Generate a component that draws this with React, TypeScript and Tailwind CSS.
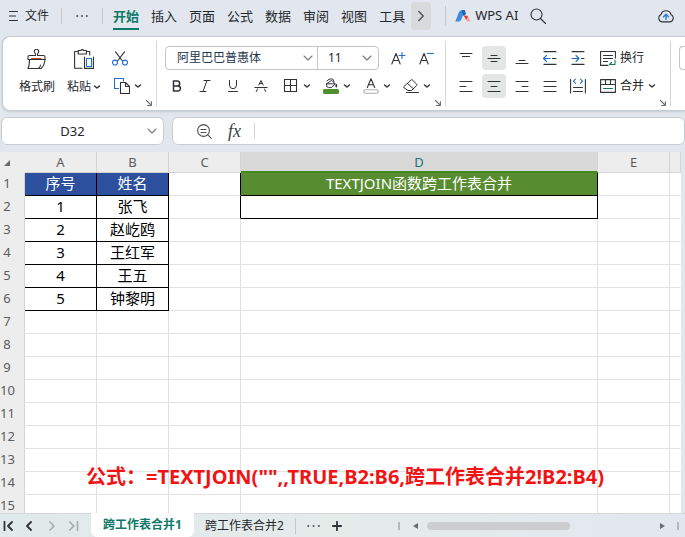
import { useState } from 'react';
import type { ReactNode } from 'react';

type IconProps = { w: number; h: number; children: ReactNode };

function Icon({ w, h, children }: IconProps) {
  return (
    <svg
      width={w}
      height={h}
      viewBox={`0 0 ${w} ${h}`}
      fill="none"
      stroke="#2f3237"
      strokeWidth="1.1"
      strokeLinecap="round"
      strokeLinejoin="round"
      className="shrink-0"
      aria-hidden="true"
    >
      {children}
    </svg>
  );
}

function Caret() {
  return (
    <Icon w={8} h={6}>
      <path d="M1.5 2 4 4l2.5-2" strokeWidth="1.5" />
    </Icon>
  );
}

function Chevron() {
  return (
    <Icon w={10} h={6}>
      <path d="m1 1 4 4 4-4" stroke="#777b80" />
    </Icon>
  );
}

function Launcher() {
  return (
    <button type="button" aria-label="更多设置" className="absolute bottom-1 right-1">
      <Icon w={6} h={6}>
        <path d="m.5.5 4.5 4.5M5.4 1.5v4H1.5" stroke="#6b6f75" />
      </Icon>
    </button>
  );
}

function ToolButton({ label, active, wide, children }: { label: string; active?: boolean; wide?: boolean; children: ReactNode }) {
  return (
    <button
      type="button"
      aria-label={label}
      className={`flex h-6 shrink-0 items-center justify-center rounded ${wide ? 'w-9 gap-1' : 'w-6'} ${active ? 'bg-[#e4e6e5]' : ''}`}
    >
      {children}
    </button>
  );
}

function Divider() {
  return <div className="my-1 w-px shrink-0 bg-[#d3d6da]" />;
}

const menuTabs = ['开始', '插入', '页面', '公式', '数据', '审阅', '视图', '工具'];

function MenuBar() {
  const [tab, setTab] = useState('开始');

  return (
    <header className="mb-1 flex h-8 shrink-0 items-center overflow-hidden pl-[9px] pr-[11px]">
      <button type="button" className="flex items-center gap-[7px] text-xs">
        <Icon w={9} h={12}>
          <path d="M.5 1.5h8M.5 6h6M.5 10.5h8" />
        </Icon>
        文件
      </button>
      <div className="ml-3 h-4 w-px bg-[#c5c9d0]" />
      <button type="button" aria-label="快速访问" className="mx-[14px]">
        <Icon w={12} h={4}>
          <path d="M1 2h.5M5.8 2h.5M10.6 2h.5" strokeWidth="1.6" />
        </Icon>
      </button>
      <div className="h-4 w-px bg-[#c5c9d0]" />
      <nav className="ml-[10px] flex gap-3">
        {menuTabs.map((name) => (
          <button
            key={name}
            type="button"
            onClick={() => setTab(name)}
            className={`h-7 shrink-0 border-y-2 border-t-transparent pt-0.5 text-[13px] ${
              tab === name ? 'border-b-[#0d7a68] font-bold text-[#0d7a68]' : 'border-b-transparent'
            }`}
          >
            {name}
          </button>
        ))}
      </nav>
      <button type="button" aria-label="更多选项卡" className="ml-[6px] flex h-7 w-5 shrink-0 items-center justify-center rounded bg-[#d9dadc]">
        <Icon w={6} h={12}>
          <path d="m.8 1.5 4.4 4.5L.8 10.5" stroke="#4b4e52" strokeWidth="1.4" />
        </Icon>
      </button>
      <div className="ml-[14px] h-5 w-px shrink-0 bg-[#c5c9d0]" />
      <button type="button" className="ml-[9px] flex shrink-0 items-center gap-1 text-[13px]">
        <Icon w={16} h={12}>
          <path d="M.3 11.500 4 2Q4.800.3 6.500.3H10L6.300 9.500Q5.500 11.500 4 11.500Z" fill="#3c8de0" stroke="none" />
          <path d="M6.500.3H10l1 3.700-2.500 2Z" fill="#1b62b5" stroke="none" />
          <path d="m9.500 8 3.300-2 2.900 5.500h-3.500Z" fill="#f3a79d" stroke="none" />
          <path d="m8.300 5.300 4.500.7-1.300 3.800Z" fill="#e2372c" stroke="none" />
        </Icon>
        WPS AI
      </button>
      <button type="button" aria-label="搜索" className="ml-3 shrink-0">
        <Icon w={16} h={16}>
          <circle cx="6.5" cy="6.5" r="5.5" />
          <path d="m10.500 10.500 5 5" />
        </Icon>
      </button>
      <button type="button" aria-label="云同步" className="ml-auto shrink-0">
        <Icon w={16} h={14}>
          <path d="M4.500 12.900a3.900 3.900 0 0 1-1.500-7.400 5.200 5.200 0 0 1 10 0 3.900 3.900 0 0 1-1.500 7.400Z" />
          <path d="M8 10.500V5.500M5.500 7.800 8 5.300l2.500 2.500" stroke="#2f7fd8" strokeWidth="1.5" />
        </Icon>
      </button>
    </header>
  );
}

function ClipboardGroup() {
  return (
    <section className="relative flex w-[153px] shrink-0 pl-4 pt-3">
      <button type="button" className="flex h-[46px] w-9 flex-col items-center justify-between text-xs leading-4">
        <Icon w={20} h={20}>
          <path d="M8.500 6.500V5L7.500 3.300a2.200 2.200 0 1 1 4 0L10.500 5v1.500h6q1.500 0 1.500 1.500v2.500H1V8q0-1.500 1.500-1.500Z" />
          <path d="M2.500 10.500q0 6-1.500 9h13q3.500-3 4-9M11.500 19.300q1.800-1 2-3.300" />
          <path d="M4.500 9.500h9.500" stroke="#c9421c" strokeWidth="1.200" />
        </Icon>
        <span className="whitespace-nowrap">格式刷</span>
      </button>
      <button type="button" className="ml-3 flex h-[46px] flex-col items-start justify-between text-xs leading-4">
        <span className="pl-[7px]">
          <Icon w={20} h={20}>
            <path d="M4 2.500H.6v16.800H8M12.500 2.500h3.200V6" />
            <path d="M4.200 1.500h2.500q1.600-1.700 3.200 0h2.500v3.500H4.200Z" />
            <path d="M10.500 8v11.400M19.400 8v11.400h-8" />
            <rect x="12.500" y="9.500" width="5" height="8" stroke="#1f6fd0" />
          </Icon>
        </span>
        <span className="flex items-center gap-[2px] whitespace-nowrap">
          粘贴
          <Caret />
        </span>
      </button>
      <div className="ml-[11px] flex flex-col gap-3 pt-0.5">
        <button type="button" aria-label="剪切">
          <Icon w={16} h={15}>
            <path d="M3.500.8 10.500 10M12.500.8 5.500 10" />
            <circle cx="3" cy="11.600" r="2.500" stroke="#1f6fd0" />
            <circle cx="13" cy="11.600" r="2.500" stroke="#1f6fd0" />
          </Icon>
        </button>
        <button type="button" aria-label="复制" className="flex items-center gap-1 pl-[2px]">
          <Icon w={16} h={16}>
            <path d="M4.500 10.500H.5V.5h9V3" stroke="#1f6fd0" />
            <path d="M6.500 4.500h5l4 4v7h-9ZM11.500 4.700v3.800h3.800" />
          </Icon>
          <Caret />
        </button>
      </div>
      <Launcher />
    </section>
  );
}

function FontGroup() {
  return (
    <section className="relative flex w-[288px] shrink-0 flex-col gap-1 pl-2 pt-[9px]">
      <div className="flex items-center">
        <div className="flex h-6 w-[214px] items-center rounded border border-[#c3c6ca] text-xs">
          <label className="relative flex h-full w-[152px] items-center border-r border-[#c3c6ca]">
            <select aria-label="字体" className="h-full w-full appearance-none pl-[11px] leading-5 text-[#24364d] outline-none">
              <option>阿里巴巴普惠体</option>
            </select>
            <span className="pointer-events-none absolute right-1">
              <Chevron />
            </span>
          </label>
          <label className="relative flex h-full flex-1 items-center">
            <select aria-label="字号" className="h-full w-full appearance-none pl-[10px] outline-none">
              <option>11</option>
            </select>
            <span className="pointer-events-none absolute right-[6px]">
              <Chevron />
            </span>
          </label>
        </div>
        <div className="ml-[7px] flex gap-1">
          <ToolButton label="增大字号">
            <Icon w={15} h={15}>
              <path d="m.8 13 4.200-10.500L9.200 13M2.300 9.500h5.400" />
              <path d="M11 1.500v6M8 4.500h6" stroke="#1f6fd0" />
            </Icon>
          </ToolButton>
          <ToolButton label="减小字号">
            <Icon w={15} h={15}>
              <path d="m.8 13 4.200-10.500L9.200 13M2.300 9.500h5.400" />
              <path d="M8.500 2.500h6" stroke="#1f6fd0" />
            </Icon>
          </ToolButton>
        </div>
      </div>
      <div className="flex items-center">
        <div className="flex gap-1">
          <ToolButton label="加粗">
            <Icon w={10} h={12}>
              <path d="M1.500 1h3.700a2.400 2.400 0 0 1 0 4.900H1.500ZM1.500 5.900h4.400a2.500 2.500 0 0 1 0 5H1.500Z" strokeWidth="1.500" />
            </Icon>
          </ToolButton>
          <ToolButton label="倾斜">
            <Icon w={12} h={12}>
              <path d="M5 .5h6M1 11.500h6M8 .5 4 11.500" strokeWidth="1" />
            </Icon>
          </ToolButton>
          <ToolButton label="下划线">
            <Icon w={10} h={12}>
              <path d="M1.500.5v4.500a3.500 3.700 0 0 0 7 0V.5M.5 11.500h9" strokeWidth="1" />
            </Icon>
          </ToolButton>
          <ToolButton label="删除线">
            <Icon w={14} h={12}>
              <path d="M4.800 5 7 .5 9.200 5M5.700 3.500h2.600M.8 7.500h12.400M3.500 9l-1.200 2.500M10.500 9l1.200 2.500" strokeWidth="1" />
            </Icon>
          </ToolButton>
        </div>
        <div className="ml-[6px] flex gap-1">
          <ToolButton label="边框" wide>
            <Icon w={16} h={14}>
              <path d="M1.500.5h12v12h-12ZM7.500.5v12M1.500 6.500h12" />
            </Icon>
            <Caret />
          </ToolButton>
          <ToolButton label="填充颜色" wide>
            <Icon w={16} h={16}>
              <path d="M4 2.800Q6 .6 8.500.8q2.500.2 2.500 2.700M8.300 2.500 3.500 5.800q-.5 3.800 2 3.800h2.800l3.700-3.300ZM3.500 5.800h8" strokeWidth="1" />
              <path d="M13.300 7v1.500" strokeWidth="1.800" />
              <rect x=".5" y="11.500" width="15" height="4" rx="1.500" fill="#4f8e2c" stroke="#4f8e2c" />
            </Icon>
            <Caret />
          </ToolButton>
          <ToolButton label="字体颜色" wide>
            <Icon w={16} h={16}>
              <path d="M4.300 9.500 8 .7l3.700 8.800M5.500 6.800h5" />
              <rect x=".7" y="11.700" width="14.600" height="3.600" rx="1.800" fill="#fff" stroke="#a9acb0" />
            </Icon>
            <Caret />
          </ToolButton>
          <ToolButton label="清除" wide>
            <Icon w={16} h={14}>
              <path d="M1 7.500 8 1q.7-.6 1.400 0l4.300 4.200q.6.700 0 1.300L8.500 11.500H5L1 8.700ZM4.500 4.500l5.800 5.200" strokeWidth="1" />
              <path d="M3.500 13.500h12" />
            </Icon>
            <Caret />
          </ToolButton>
        </div>
      </div>
      <Launcher />
    </section>
  );
}

function AlignGroup() {
  return (
    <section className="relative flex w-[224px] shrink-0 flex-col gap-1 pl-2 pt-[9px]">
      <div className="flex items-center gap-1">
        <ToolButton label="顶端对齐">
          <Icon w={14} h={14}>
            <path d="M1 2.500h12M3.500 5.500h7" />
          </Icon>
        </ToolButton>
        <ToolButton label="垂直居中" active>
          <Icon w={14} h={14}>
            <path d="M4 4.500h6M1 7.500h12M4 10.500h6" />
          </Icon>
        </ToolButton>
        <ToolButton label="底端对齐">
          <Icon w={14} h={14}>
            <path d="M4 9.500h6M1 12.500h12" />
          </Icon>
        </ToolButton>
        <ToolButton label="减少缩进量">
          <Icon w={14} h={14}>
            <path d="M1 .6h12M9.500 7.500H13M1 13.400h12" />
            <path d="M1 7.500h6M3.500 4.500l-3 3 3 3" stroke="#1f6fd0" />
          </Icon>
        </ToolButton>
        <ToolButton label="增加缩进量">
          <Icon w={14} h={14}>
            <path d="M1 .6h12M10.500 7.500H13M1 13.400h12" />
            <path d="M1 7.500h6.500M5 4.500l3 3-3 3" stroke="#1f6fd0" />
          </Icon>
        </ToolButton>
        <button type="button" className="ml-[6px] flex items-center gap-1 text-xs">
          <Icon w={16} h={15}>
            <path d="M8 14.400H.6V.5h14.800V7M3.500 4.500h9M3.500 7.500h9M3.500 10.500h4" />
            <path d="M15 9v4.500h-5M11.500 11.500l-2 2" stroke="#15795f" />
          </Icon>
          换行
        </button>
      </div>
      <div className="flex items-center gap-1">
        <ToolButton label="左对齐">
          <Icon w={14} h={14}>
            <path d="M1 2.500h12M1 7.500h6M1 12.500h12" />
          </Icon>
        </ToolButton>
        <ToolButton label="水平居中" active>
          <Icon w={14} h={14}>
            <path d="M1 2.500h12M4 7.500h6M1 12.500h12" />
          </Icon>
        </ToolButton>
        <ToolButton label="右对齐">
          <Icon w={14} h={14}>
            <path d="M1 2.500h12M7 7.500h6M1 12.500h12" />
          </Icon>
        </ToolButton>
        <ToolButton label="两端对齐">
          <Icon w={14} h={14}>
            <path d="M1 2.500h12M1 7.500h12M1 12.500h12" />
          </Icon>
        </ToolButton>
        <ToolButton label="分散对齐">
          <Icon w={16} h={16}>
            <path d="M.6 1.500v13.500M15.400 1.500v13.500M3.500 9.500h9M3.500 13.500h9" />
            <path d="M5.500 1 3.500 3.200l2 2.200M10.500 1l2 2.200-2 2.200" stroke="#1f6fd0" />
          </Icon>
        </ToolButton>
        <button type="button" className="ml-[6px] flex items-center gap-1 text-xs">
          <Icon w={16} h={14}>
            <path d="M.6.600h14.800v12.800H.6ZM.6 5.500h14.800M5.500.600v4.900M10.500.600v4.900" />
            <path d="M3.500 9.500h9" stroke="#15795f" />
          </Icon>
          合并
          <Caret />
        </button>
      </div>
      <Launcher />
    </section>
  );
}

function Ribbon() {
  return (
    <div className="ml-[2px] flex h-[75px] shrink-0 overflow-hidden rounded-l-lg border border-r-0 border-[#c6cad1] bg-white shadow-sm">
      <ClipboardGroup />
      <Divider />
      <FontGroup />
      <Divider />
      <AlignGroup />
      <Divider />
      <div className="ml-2 mt-[9px] h-6 flex-1 rounded-l border border-r-0 border-[#c3c6ca]" />
    </div>
  );
}

function FormulaBar() {
  return (
    <div className="mb-[7px] mt-[6px] flex h-7 shrink-0 gap-2 pl-[1px]">
      <div className="flex w-[163px] shrink-0 items-center rounded-md border border-[#c9cdd2] bg-white pr-[6px]">
        <input
          aria-label="名称框"
          defaultValue="D32"
          className="h-full w-full min-w-0 pr-1 text-center text-[13px] outline-none"
        />
        <button type="button" aria-label="名称列表">
          <Chevron />
        </button>
      </div>
      <div className="flex flex-1 items-center rounded-md border border-[#c9cdd2] bg-white pl-6">
        <button type="button" aria-label="浏览公式结果">
          <Icon w={15} h={15}>
            <circle cx="6.5" cy="6.5" r="5.900" stroke="#4b4e52" />
            <path d="m10.800 10.800 3.500 3.500M4 5.500h5M4 8.500h5" stroke="#4b4e52" />
          </Icon>
        </button>
        <button type="button" aria-label="插入函数" className="ml-4 font-['Liberation_Serif',serif] text-lg italic leading-6 text-[#3c3f44]">
          fx
        </button>
        <div className="ml-[13px] h-4 w-px bg-[#d3d6da]" />
        <input aria-label="编辑栏" className="h-full min-w-0 flex-1 px-2 text-[13px] outline-none" />
      </div>
    </div>
  );
}

const people = [
  ['1', '张飞'],
  ['2', '赵屹鸥'],
  ['3', '王红军'],
  ['4', '王五'],
  ['5', '钟黎明'],
];

const cell = 'h-[23px] border-b border-r p-0 pb-0.5 text-center text-[15px] leading-5';
const plain = `${cell} border-[#e2e2e2]`;
const boxed = `${cell} border-black`;

function SheetRow({ row }: { row: number }) {
  const person = people[row - 2];
  const head = row === 1;

  return (
    <tr className="text-black">
      <th scope="row" className="h-[23px] border-b border-r border-b-[#ededed] border-r-[#d4d4d4] bg-[#ededed] p-0 pb-0.5 pr-[10px] text-center text-[13px] font-normal leading-4 text-[#5c5c5c]">
        {row}
      </th>
      {head && <td className={`${boxed} bg-[#2c509e] text-white`}>序号</td>}
      {head && <td className={`${boxed} bg-[#2c509e] text-white`}>姓名</td>}
      {!head && <td className={person ? boxed : plain}>{person?.[0]}</td>}
      {!head && <td className={person ? boxed : plain}>{person?.[1]}</td>}
      <td className={row <= 2 ? `${cell} border-b-[#e2e2e2] border-r-black` : plain} />
      <td className={head ? `${boxed} bg-[#588c31] text-white` : row === 2 ? boxed : plain}>
        {head && 'TEXTJOIN函数跨工作表合并'}
      </td>
      <td className={plain} />
      <td className={`${cell} border-b-[#e2e2e2] border-r-transparent`} />
    </tr>
  );
}

function Sheet() {
  const rows = Array.from({ length: 15 }, (_, i) => i + 1);

  return (
    <main className="relative min-h-0 flex-1 overflow-hidden pr-1">
      <table className="w-full table-fixed border-separate border-spacing-0 bg-white">
        <colgroup>
          <col className="w-[25px]" />
          <col className="w-[72px]" />
          <col className="w-[72px]" />
          <col className="w-[72px]" />
          <col className="w-[357px]" />
          <col className="w-[72px]" />
          <col />
        </colgroup>
        <thead>
          <tr className="bg-[#ededed] text-[13px] leading-4 text-[#5c5c5c]">
            <th className="h-[21px] p-0 pl-1">
              <Icon w={6} h={6}>
                <path d="M6 0v6H0Z" fill="#6b6b6b" stroke="none" />
              </Icon>
            </th>
            {['A', 'B', 'C', 'D', 'E', ''].map((name) => (
              <th
                key={name}
                scope="col"
                className={`h-[21px] p-0 font-normal ${
                  name === 'D'
                    ? 'border-b-2 border-r border-b-[#438a1e] border-r-[#d4d4d4] bg-[#d9d9d9] text-[#1f6f7c]'
                    : 'border-b border-r border-[#d4d4d4]'
                }`}
              >
                {name}
              </th>
            ))}
          </tr>
        </thead>
        <tbody>
          {rows.map((row) => (
            <SheetRow key={row} row={row} />
          ))}
        </tbody>
      </table>
      {/* caption floating over the cells */}
      <p className="absolute bottom-[22px] left-[86px] whitespace-nowrap text-xl font-bold text-[#f01414]">
        公式：=TEXTJOIN("",,TRUE,B2:B6,跨工作表合并2!B2:B4)
      </p>
    </main>
  );
}

function SheetTabs() {
  return (
    <footer className="flex h-6 shrink-0 items-center border-t border-[#d3d8da] bg-linear-to-r from-[#e0e9eb] via-[#e5ebe9] to-[#e2e7ef] text-xs">
      <button type="button" aria-label="第一张" className="ml-[3px]">
        <Icon w={11} h={10}>
          <path d="M1.500.8v8.400M9 1 5 5l4 4" strokeWidth="1.800" />
        </Icon>
      </button>
      <button type="button" aria-label="上一张" className="ml-[11px]">
        <Icon w={8} h={10}>
          <path d="M6 1 2 5l4 4" strokeWidth="1.800" />
        </Icon>
      </button>
      <button type="button" aria-label="下一张" className="ml-4">
        <Icon w={8} h={10}>
          <path d="m1 1 4 4-4 4" stroke="#a3a8aa" strokeWidth="1.500" />
        </Icon>
      </button>
      <button type="button" aria-label="最后一张" className="ml-3">
        <Icon w={10} h={10}>
          <path d="m.8 1 4 4-4 4M8.500.8v8.400" stroke="#a3a8aa" strokeWidth="1.500" />
        </Icon>
      </button>
      <button type="button" className="-mt-px ml-3 h-6 shrink-0 rounded-b-md bg-white px-3 font-bold text-[#0d7a68]">
        跨工作表合并1
      </button>
      <button type="button" className="h-6 shrink-0 px-[11px]">
        跨工作表合并2
      </button>
      <div className="h-4 w-px bg-[#c3c9cb]" />
      <button type="button" aria-label="全部工作表" className="ml-[11px]">
        <Icon w={13} h={4}>
          <path d="M1 2h.5M6.300 2h.5M11.600 2h.5" strokeWidth="1.600" />
        </Icon>
      </button>
      <button type="button" aria-label="新建工作表" className="ml-3">
        <Icon w={10} h={10}>
          <path d="M5 .8v8.400M.8 5h8.400" strokeWidth="1.800" />
        </Icon>
      </button>
      <div className="ml-14 h-2 w-[2px] bg-[#b5b9bb]" />
      <div className="ml-[13px] flex flex-1 items-center">
        <Icon w={5} h={6}>
          <path d="M5 0v6L0 3Z" fill="#6b6a73" stroke="none" />
        </Icon>
        <div className="mx-[9px] flex-1">
          <div className="h-2 w-[64%] rounded-full bg-[#cbcdcf]" />
        </div>
        <Icon w={5} h={6}>
          <path d="M0 0v6l5-3Z" fill="#6b6a73" stroke="none" />
        </Icon>
      </div>
      <div className="ml-3 mr-[6px] h-2 w-[2px] bg-[#b5b9bb]" />
    </footer>
  );
}

export default function App() {
  return (
    <div className="flex h-screen flex-col overflow-hidden bg-linear-to-b from-[#e2e7ef] to-[#e2e7ec] font-['Noto_Sans','Noto_Sans_CJK_SC',sans-serif] text-[#24272b]">
      <MenuBar />
      <Ribbon />
      <FormulaBar />
      <Sheet />
      <SheetTabs />
    </div>
  );
}
